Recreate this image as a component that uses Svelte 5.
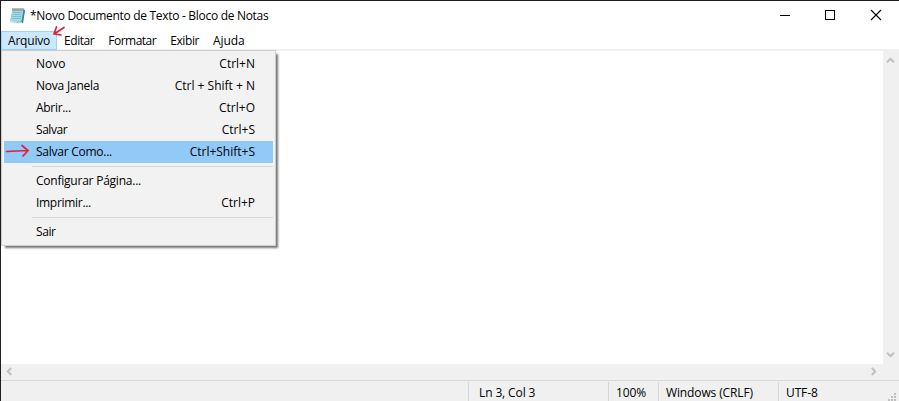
<script>
  const menus = [
    { label: 'Arquivo', active: true, spacing: -0.2 },
    { label: 'Editar', spacing: -0.45 },
    { label: 'Formatar', spacing: -0.5 },
    { label: 'Exibir', spacing: -0.4 },
    { label: 'Ajuda', spacing: -0.1 }
  ];
  const groups = [
    [
      { label: 'Novo', spacing: 0, key: 'Ctrl+N' },
      { label: 'Nova Janela', spacing: -0.22, key: 'Ctrl + Shift + N' },
      { label: 'Abrir...', spacing: -0.3, key: 'Ctrl+O' },
      { label: 'Salvar', spacing: -0.45, key: 'Ctrl+S' },
      { label: 'Salvar Como...', spacing: -0.25, key: 'Ctrl+Shift+S', active: true }
    ],
    [
      { label: 'Configurar Página...', spacing: -0.23 },
      { label: 'Imprimir...', spacing: -0.3, key: 'Ctrl+P' }
    ],
    [{ label: 'Sair', spacing: -0.4 }]
  ];
</script>

<div class="window">
  <header class="titlebar">
    <svg class="app-icon" width="18" height="18" viewBox="0 0 18 18">
      <path d="M3.5 2.5 16 2.5 14 16 1 15z" fill="#70b4c5" />
      <path d="M3.5 3 14.5 3 12.5 14.5 1.5 14z" fill="#a3dce8" />
      <path d="M14.5 3h1.5l-2 13H6l6.5-1.5z" fill="#4a7f8d" />
      <path d="M4 5.5h9M3.6 7.5h9M3.2 9.5h9M2.8 11.5h9" stroke="#72b7c9" stroke-width=".8" />
      <path d="M4 1v3M6 1v3M8 1v3M10 1v3M12 1v3M14 1v3" stroke="#77776f" stroke-width="1" />
      <path d="M1 14.5 13 15.5" stroke="#d7e4e5" />
    </svg>
    <span class="title">*Novo Documento de Texto - Bloco de Notas</span>
    <svg class="controls" width="138" height="30" viewBox="0 0 138 30" fill="none" stroke="#000" shape-rendering="crispEdges">
      <path d="M19 14.5h10" />
      <rect x="64.5" y="9.5" width="9" height="9" />
      <path d="M110 9l10 10M120 9l-10 10" shape-rendering="auto" stroke-width="1.1" />
    </svg>
  </header>
  <nav class="menubar">
    {#each menus as m}
      <span class="menu-title" class:active={m.active} style:letter-spacing="{m.spacing}px">{m.label}</span>
    {/each}
  </nav>
  <main class="editor">
    <div class="page"></div>
    <div class="vscroll">
      <svg width="9" height="7" viewBox="0 0 9 7"><path d="M1 5.2 4.5 1.8 8 5.2" /></svg>
      <svg width="9" height="7" viewBox="0 0 9 7"><path d="M1 1.8 4.5 5.2 8 1.8" /></svg>
    </div>
  </main>
  <div class="hscroll">
    <svg width="7" height="9" viewBox="0 0 7 9"><path d="M5.2 1 1.8 4.5 5.2 8" /></svg>
    <svg width="7" height="9" viewBox="0 0 7 9"><path d="M1.8 1 5.2 4.5 1.8 8" /></svg>
  </div>
  <footer class="status">
    <span class="cell blank"></span>
    <span class="cell position">Ln 3, Col 3</span>
    <span class="cell zoom">100%</span>
    <span class="cell eol">Windows (CRLF)</span>
    <span class="cell encoding">UTF-8</span>
    <svg class="grip" width="9" height="9" viewBox="0 0 9 9" fill="#bfbfbf" shape-rendering="crispEdges">
      <path d="M6 0h2v2H6zM3 3h2v2H3zM6 3h2v2H6zM0 6h2v2H0zM3 6h2v2H3zM6 6h2v2H6z" />
    </svg>
  </footer>

  <div class="dropdown">
    {#each groups as group, g}
      {#if g > 0}<div class="separator"></div>{/if}
      {#each group as item}
        <div class="item" class:active={item.active}>
          <span style:letter-spacing="{item.spacing}px">{item.label}</span>
          {#if item.key}<span>{item.key}</span>{/if}
        </div>
      {/each}
    {/each}
  </div>

  <svg class="arrow top-arrow" width="14" height="12" viewBox="0 0 14 12">
    <path d="M12 2.5 3 8.5M4.5 2 2 8.8 9 10" />
  </svg>
  <svg class="arrow row-arrow" width="26" height="14" viewBox="0 0 26 14">
    <path d="M1.5 7.5 22.5 6.5M17 1.5 23 6.5 18 12" />
  </svg>
</div>

<style>
  :global(body) { margin: 0; overflow: hidden; }
  .window {
    position: relative;
    box-sizing: border-box;
    width: 899px;
    height: 401px;
    display: flex;
    flex-direction: column;
    background: #fff;
    border: 0 solid #211f22;
    border-width: 1px 0 0 1px;
    color: #000;
    font: 12px/16px "Open Sans", "Noto Sans", sans-serif;
    white-space: nowrap;
  }
  .titlebar { height: 30px; display: flex; flex: none; }
  .app-icon { margin: 6px 3px 0 8px; }
  .title { line-height: 30px; letter-spacing: -0.3px; }
  .controls { margin-left: auto; }
  .menubar { height: 18px; flex: none; display: flex; border-bottom: 2px solid #f0f0f0; }
  .menu-title { box-sizing: border-box; padding: 0 7px; line-height: 20px; height: 19px; }
  .menu-title.active { background: #cce8ff; box-shadow: inset 0 0 0 1px #99d1ff; }
  .editor { flex: 1; display: flex; }
  .page { flex: 1; }
  .vscroll {
    box-sizing: border-box;
    width: 16px;
    padding: 6px 0 6px 3px;
    background: #f0f0f0;
    display: flex;
    flex-direction: column;
    justify-content: space-between;
  }
  .vscroll path, .hscroll path { fill: none; stroke: #bfbfbf; stroke-width: 2; }
  .hscroll {
    box-sizing: border-box;
    height: 16px;
    flex: none;
    padding: 3px 22px 0 5px;
    background: #f0f0f0;
    display: flex;
    justify-content: space-between;
  }
  .status {
    box-sizing: border-box;
    height: 21px;
    flex: none;
    display: flex;
    padding-top: 1px;
    background: #f0f0f0;
    border-top: 1px solid #d7d7d7;
  }
  .cell { box-sizing: border-box; border-right: 1px solid #d7d7d7; line-height: 22px; height: 19px; padding-left: 7px; letter-spacing: -0.12px; }
  .blank { width: 468px; }
  .position { width: 140px; padding-left: 10px; }
  .zoom { width: 50px; }
  .eol { width: 120px; }
  .encoding { width: 109px; border: 0; }
  .grip { margin-top: 11px; flex: none; }
  .dropdown {
    position: absolute;
    box-sizing: border-box;
    left: 0;
    top: 49px;
    width: 275px;
    height: 196px;
    padding: 2px;
    background: #f2f2f2;
    border: 1px solid #ccc;
    box-shadow: 3px 3px 2px -1px #777;
  }
  .item {
    height: 22px;
    padding: 0 18px 0 32px;
    line-height: 22px;
    display: flex;
    justify-content: space-between;
  }
  .item.active { background: #91c9f7; }
  .separator { height: 1px; margin: 3px 0 3px 28px; background: #d7d7d7; }
  .arrow { position: absolute; fill: none; stroke: #e51e3b; stroke-width: 1.7; stroke-linecap: round; }
  .top-arrow { left: 51px; top: 24px; }
  .row-arrow { left: 4px; top: 143px; }
</style>
